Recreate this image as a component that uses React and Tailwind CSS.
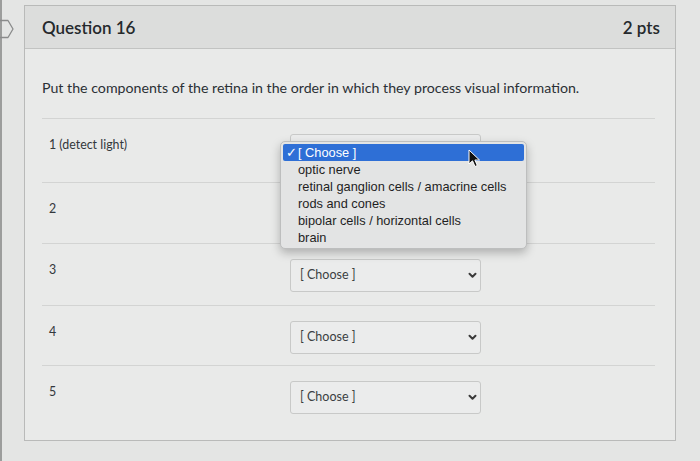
const rows = [
  { label: "1 (detect light)", h: "h-[64px]", open: true },
  { label: "2", h: "h-[61px]", hidden: true },
  { label: "3", h: "h-[62px]" },
  { label: "4", h: "h-[60px]" },
  { label: "5", h: "h-[75px]", last: true },
];

const options = [
  "optic nerve",
  "retinal ganglion cells / amacrine cells",
  "rods and cones",
  "bipolar cells / horizontal cells",
  "brain",
];

const Chevron = () => (
  <svg width="9" height="7" viewBox="0 0 9 7">
    <path d="M1.5 1.8 L4.5 4.8 L7.5 1.8" fill="none" stroke="#3a3a3a" strokeWidth="2" strokeLinecap="round" strokeLinejoin="round" />
  </svg>
);

const Cursor = () => (
  <svg width="14" height="20" viewBox="0 0 14 20" className="absolute left-[185px] top-[5px]">
    <path d="M1 1 L1 15 L4.5 11.8 L7 17.5 L9.3 16.5 L6.9 11 L11.5 11 Z" fill="#111" stroke="#fff" strokeWidth="1" strokeLinejoin="round" />
  </svg>
);

const Select = ({ open, hidden }) => (
  <div className="relative">
    <div className="w-[191px] h-[33px] border border-[#c8c9c8] rounded-[3px] bg-[#ebecec] flex items-center justify-between pl-[9px] pr-[3px]">
      {!hidden && (
        <>
          <span className="text-[12.5px] text-[#3b3f42]">[ Choose ]</span>
          <Chevron />
        </>
      )}
    </div>
    {open && (
      <div
        className="absolute left-[-10px] top-[7px] w-[247px] z-10 rounded-[5px] border border-[#bdbebe] bg-[#e3e4e4] shadow-[0_4px_10px_rgba(0,0,0,0.25)] py-[2px] px-[2px]"
        style={{ fontFamily: '"Liberation Sans", Arial, sans-serif' }}
      >
        <div className="relative h-[17px] bg-[#2e6fd6] rounded-[2px] flex items-center text-white text-[12.8px] pl-[3px]">
          <span className="w-[12px]">✓</span>
          <span>[ Choose ]</span>
          <Cursor />
        </div>
        {options.map((o) => (
          <div key={o} className="h-[17px] flex items-center pl-[15px] text-[12.8px] text-[#1f1f1f]">
            {o}
          </div>
        ))}
      </div>
    )}
  </div>
);

export default function App() {
  return (
    <div
      className="relative w-[700px] h-[461px] bg-[#e4e5e4] overflow-hidden text-[#2b3035]"
      style={{ fontFamily: "Lato, 'Open Sans', sans-serif" }}
    >
      <div className="absolute left-0 top-0 w-[2px] h-full bg-[#9c9d9c]" />
      <svg width="16" height="20" viewBox="0 0 16 20" className="absolute left-0 top-[19px]">
        <path d="M-2 1.5 L8 1.5 L13 10 L8 18.5 L-2 18.5" fill="none" stroke="#8a8b8b" strokeWidth="1.3" strokeLinejoin="round" />
      </svg>

      <div className="ml-[24px] mt-[5px] w-[652px] h-[436px] border border-[#b9bab9] bg-[#e9eae9]">
        <div className="h-[43px] pl-[17px] pr-[15px] flex items-center justify-between bg-[#dcdddc] border-b border-[#c2c3c2]">
          <span className="text-[17px] font-semibold text-[#25292c] mt-[2px]">Question 16</span>
          <span className="text-[17px] font-semibold text-[#25292c] mt-[2px]">2 pts</span>
        </div>

        <div className="pl-[17px] pr-[20px]">
          <div className="pt-[29px] pb-[20px] border-b border-[#d3d4d3] text-[14.2px] leading-[20px]">
            Put the components of the retina in the order in which they process visual information.
          </div>

          {rows.map((r) => (
            <div
              key={r.label}
              className={`${r.h} flex items-start pt-[15px] ${r.last ? "" : "border-b border-[#d3d4d3]"}`}
            >
              <div className="w-[248px] pl-[7px] mt-[2px] text-[12.4px] leading-[18px] text-[#33383c]">{r.label}</div>
              <Select open={r.open} hidden={r.hidden || r.open} />
            </div>
          ))}
        </div>
      </div>
    </div>
  );
}
